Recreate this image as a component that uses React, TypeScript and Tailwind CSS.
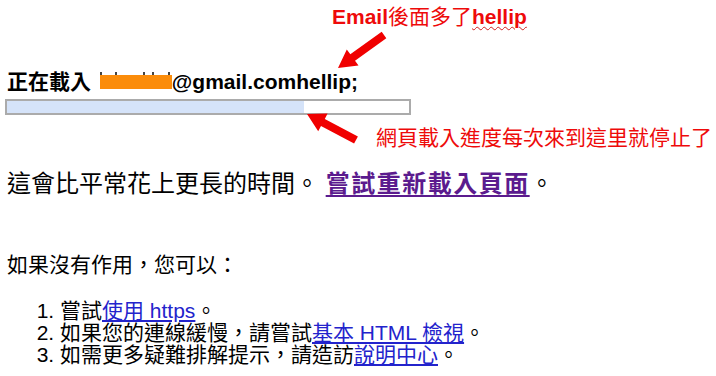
import React from "react";

type Pt = [number, number];

// builds a fat arrow polygon from tail to tip
function arrowPoints(tail: Pt, tip: Pt, shaft = 4, head = 10, headLen = 18) {
  const dx = tip[0] - tail[0];
  const dy = tip[1] - tail[1];
  const len = Math.hypot(dx, dy);
  const ux = dx / len;
  const uy = dy / len;
  const nx = -uy;
  const ny = ux;
  const hx = tip[0] - ux * headLen;
  const hy = tip[1] - uy * headLen;
  const pts: Pt[] = [
    [tail[0] + nx * shaft, tail[1] + ny * shaft],
    [hx + nx * shaft, hy + ny * shaft],
    [hx + nx * head, hy + ny * head],
    tip,
    [hx - nx * head, hy - ny * head],
    [hx - nx * shaft, hy - ny * shaft],
    [tail[0] - nx * shaft, tail[1] - ny * shaft],
  ];
  return pts.map((p) => `${p[0].toFixed(1)},${p[1].toFixed(1)}`).join(" ");
}

// the orange smudge hiding the user name, with letter tips poking out above
const MaskedName: React.FC = () => (
  <svg width={72} height={17} className="inline-block align-baseline ml-[3px]">
    <rect x={0} y={3} width={72} height={14} fill="#fb8c0a" />
    {[0, 15, 43, 52, 68].map((x) => (
      <rect key={x} x={x} y={0} width={2} height={3} fill="#444" />
    ))}
  </svg>
);

const App: React.FC = () => {
  return (
    <div
      lang="zh-Hant-TW"
      className="relative w-[716px] h-[376px] overflow-hidden bg-white text-black font-['Liberation_Sans','Noto_Sans_CJK_TC',sans-serif]"
    >
      <div className="flex flex-col items-start pt-[70px] pl-[7px]">
        <div className="text-[21px] leading-[24px] font-bold whitespace-nowrap">
          正在載入 <MaskedName />
          @gmail.comhellip;
        </div>

        <div className="mt-[5px] -ml-[2px] w-[406px] h-[16px] border-2 border-[#ababab] bg-white">
          <div className="w-[297px] h-full bg-[#d5e3f9]" />
        </div>

        <div className="mt-[55px] text-[24px] leading-[28px] whitespace-nowrap">
          這會比平常花上更長的時間。{" "}
          <a href="#" className="font-bold text-[#5b1b8e] underline underline-offset-[3px] tracking-[1.5px]">
            嘗試重新載入頁面
          </a>
          。
        </div>

        <div className="mt-[55px] text-[21px] leading-[24px]">如果沒有作用，您可以：</div>

        <ol className="mt-[23px] pl-[53px] list-decimal text-[21px] leading-[22px] whitespace-nowrap">
          <li>
            嘗試
            <a href="#" className="text-[#2323cc] underline">
              使用 https
            </a>
            。
          </li>
          <li>
            如果您的連線緩慢，請嘗試
            <a href="#" className="text-[#2323cc] underline">
              基本 HTML 檢視
            </a>
            。
          </li>
          <li>
            如需更多疑難排解提示，請造訪
            <a href="#" className="text-[#2323cc] underline">
              說明中心
            </a>
            。
          </li>
        </ol>
      </div>

      {/* annotations drawn over the page */}
      <div className="absolute left-[332px] top-[5px] text-[21px] leading-[24px] text-[#ee0a0a] whitespace-nowrap">
        <span className="font-bold">Email</span>後面多了
        <span className="font-bold underline decoration-wavy decoration-[#d02020] decoration-1 underline-offset-2">
          hellip
        </span>
      </div>
      <div className="absolute left-[376px] top-[126px] text-[21px] leading-[24px] text-[#ee0a0a] whitespace-nowrap">
        網頁載入進度每次來到這里就停止了
      </div>

      <svg className="absolute inset-0 pointer-events-none" width={716} height={376}>
        <polygon points={arrowPoints([384, 35], [338, 68])} fill="#f00000" />
        <polygon points={arrowPoints([356, 140], [307, 114])} fill="#f00000" />
      </svg>
    </div>
  );
};

export default App;
